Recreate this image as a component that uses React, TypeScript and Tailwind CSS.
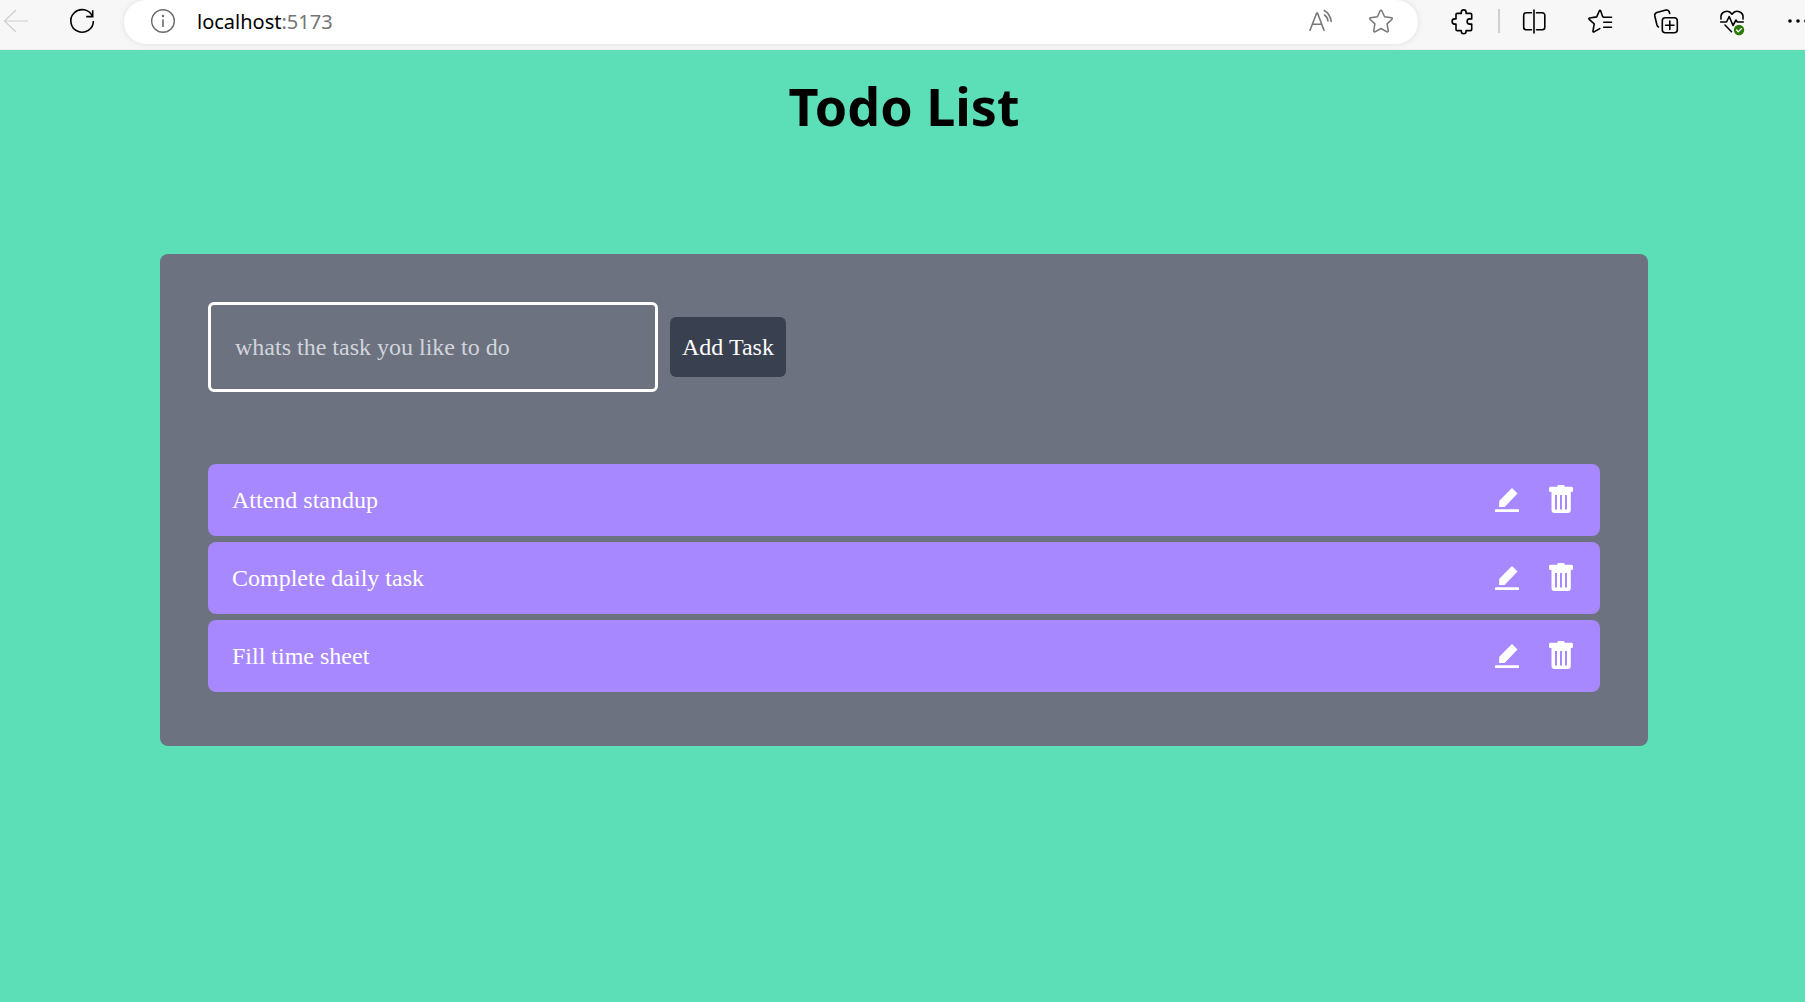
import React, { useState } from "react";

const TASKS = ["Attend standup", "Complete daily task", "Fill time sheet"];

type IconProps = { children: React.ReactNode; className?: string };

function Icon({ children, className = "text-black" }: IconProps) {
  return (
    <svg
      viewBox="0 0 24 24"
      className={`block size-6 overflow-visible ${className}`}
      fill="none"
      stroke="currentColor"
      strokeWidth="1.6"
      strokeLinecap="round"
      strokeLinejoin="round"
      aria-hidden="true"
    >
      {children}
    </svg>
  );
}

function ToolButton({ label, children, className }: IconProps & { label: string }) {
  return (
    <button type="button" aria-label={label} className="shrink-0">
      <Icon className={className}>{children}</Icon>
    </button>
  );
}

function BrowserBar() {
  const [url, setUrl] = useState("localhost:5173");
  const colon = url.indexOf(":");
  const host = colon < 0 ? url : url.slice(0, colon);
  const port = colon < 0 ? "" : url.slice(colon);
  return (
    <header className="flex h-[50px] items-start overflow-hidden border-b border-[#ebebeb] bg-[#f7f7f7] pl-1">
      <div className="flex h-11 shrink-0 items-center gap-[42px] pr-[30px] pb-0.5">
        <ToolButton label="Back" className="text-[#cfcfcf]">
          <path d="M0.5 12H23.5M11.5 1.5L0.5 12l11 10.5" strokeWidth="1.2" />
        </ToolButton>
        <ToolButton label="Refresh">
          <path d="M22.5 7.5A11.3 11.3 0 1 0 23.4 12M22.7 1.2v6.4h-6.5" strokeLinecap="butt" strokeLinejoin="miter" />
        </ToolButton>
      </div>
      <div className="flex h-11 min-w-0 flex-1 items-center rounded-full bg-white pr-[25px] pb-0.5 pl-[27px] shadow-[0_0_6px_rgba(0,0,0,0.1)]">
        <ToolButton label="Site information" className="text-[#6b6b6b]">
          <circle cx="12" cy="12" r="11.3" strokeWidth="1.4" />
          <path d="M12 10.5V18" strokeLinecap="butt" />
          <circle cx="12" cy="7" r="1.2" fill="currentColor" stroke="none" />
        </ToolButton>
        <button
          type="button"
          aria-label="Address"
          onClick={() => setUrl(url)}
          className="ml-[22px] flex-1 pt-0.5 text-left font-['Noto_Sans',sans-serif] text-[20px] leading-6 text-black"
        >
          {host}
          <span className="text-[#757575]">{port}</span>
        </button>
        <div className="flex items-center gap-9">
          <ToolButton label="Read aloud" className="text-[#777777]">
            <path d="M1 21.3L7.7 4h.8L15 21.3M3.5 15.3h9.2M15.2 1.5C19 3.5 21.5 7.5 22.2 12.5M15.5 6c2 1.300 3.200 3.500 3.500 6" strokeWidth="1.6" />
          </ToolButton>
          <ToolButton label="Add to favorites" className="text-[#777777]">
            <path
              d="M11.200 1.700a.9.9 0 0 1 1.600 0l2.800 6.100 6.900.9a.9.9 0 0 1 .5 1.500l-4.900 4.700 1.200 7a.9.9 0 0 1-1.300.9L12 19.500l-6 3.300a.9.9 0 0 1-1.300-.9l1.200-7L1 10.200a.9.9 0 0 1 .5-1.500l6.900-.9z"
              strokeWidth="1.5"
            />
          </ToolButton>
        </div>
      </div>
      <div className="flex h-11 shrink-0 items-center pb-0.5 pl-8">
        <ToolButton label="Extensions">
          <path d="M7.200 4.400H11.300V3.300a2.400 2.400 0 0 1 4.800 0V4.400h4.400a1.200 1.200 0 0 1 1.200 1.200V9.900H19.700a2.500 2.500 0 0 0 0 5.200h2v5.300a1.200 1.200 0 0 1-1.200 1.200H16.100v.7a2.400 2.400 0 0 1-4.800 0v-.7H7.200a1.200 1.200 0 0 1-1.200-1.200V15.100H4.700a2.500 2.500 0 0 1 0-5.200H6V5.600a1.200 1.200 0 0 1 1.200-1.200z" />
        </ToolButton>
        <span className="mr-[22px] ml-6 h-6 w-0.5 bg-[#cfcfcf]" />
        <div className="-mr-[5px] flex items-center gap-[42px]">
          <ToolButton label="Split screen">
            <path d="M12 1v23" />
            <path d="M9.500 3.800H4.200a2.500 2.500 0 0 0-2.500 2.500v12a2.500 2.500 0 0 0 2.500 2.500h5.300M14.500 3.800h5.800a2.500 2.500 0 0 1 2.500 2.500v12a2.500 2.500 0 0 1-2.500 2.500h-5.800" />
          </ToolButton>
          <ToolButton label="Favorites">
            <path d="M23.500 8.200H16l-1.300-.5L12.700 2q-.7-1.300-1.400 0L8.700 7.900 1.600 9q-1.300.400-.4 1.400l5 4.500L5 22q-.1 1.400 1 .9l5.800-3.300M15.700 13.300h7.800M15.700 18.200h7.800" />
          </ToolButton>
          <ToolButton label="Collections">
            <rect x="8.300" y="8.700" width="15" height="15" rx="3" />
            <path d="M15.800 12v8.400M11.600 16.200h8.400M4.500 18C3.500 17.500 3.100 16.500 2.800 15.500L.8 7C.4 5 1.300 4 2.800 3.500L12 1.100c2-.4 3.200.5 3.700 3.400" />
          </ToolButton>
          <ToolButton label="Browser essentials">
            <path d="M1 10C-.200 3 8-.500 12 5.200 16-.500 24.200 3 23 10M.7 13H6.500l2.700-5.500 3.800 9 3-5.500 1.300 2h6M5 16l6.500 6.700" />
            <circle cx="19" cy="21" r="5.200" fill="#2b7a0b" stroke="none" />
            <path d="M16.600 21l1.700 1.700 3-3" stroke="white" strokeWidth="1.3" />
          </ToolButton>
          <ToolButton label="More">
            <g fill="currentColor" stroke="none">
              <circle cx="4" cy="12" r="1.800" />
              <circle cx="12" cy="12" r="1.800" />
              <circle cx="20" cy="12" r="1.800" />
            </g>
          </ToolButton>
        </div>
      </div>
    </header>
  );
}

function EditIcon() {
  return (
    <svg viewBox="0 0 24 24" className="block size-6" fill="white" aria-hidden="true">
      <path d="M17 0l5.500 5.500-11.500 12L9.500 19H4l.3-6.300z" />
      <rect y="21.300" width="24" height="2.700" rx=".5" />
    </svg>
  );
}

function TrashIcon() {
  return (
    <svg viewBox="0 0 24 30" className="block h-[30px] w-6" fill="white" aria-hidden="true">
      <path
        fillRule="evenodd"
        d="M10 0h4a1.500 1.500 0 0 1 1.500 1.800h7A1.500 1.500 0 0 1 24 3.300V5.500A1.500 1.500 0 0 1 22.500 7h-.7v18a3 3 0 0 1-3 3H5.500a3 3 0 0 1-3-3V7h-1A1.500 1.500 0 0 1 0 5.500V3.300A1.500 1.500 0 0 1 1.500 1.800h7A1.500 1.500 0 0 1 10 0zM6 10v14.500h2V10zM11 10v14.500h2V10zM16 10v14.500h2V10z"
      />
    </svg>
  );
}

export default function App() {
  const [tasks, setTasks] = useState(TASKS);
  const [draft, setDraft] = useState("");

  const addTask = (event: React.FormEvent) => {
    event.preventDefault();
    if (draft.trim()) {
      setTasks([...tasks, draft.trim()]);
      setDraft("");
    }
  };

  return (
    <div className="min-h-screen bg-[#5cdeb7] font-['Liberation_Serif',serif] text-2xl text-white">
      <BrowserBar />
      <main className="pr-[157px] pl-40">
        <h1 className="pt-[18px] text-center font-['Noto_Sans',sans-serif] text-[52px] leading-[76px] font-bold text-black">
          Todo List
        </h1>
        <section className="mt-[110px] rounded-lg bg-[#6c7280] px-12 pt-12 pb-[54px]">
          <form onSubmit={addTask} className="flex items-center gap-3">
            <input
              type="text"
              aria-label="New task"
              value={draft}
              onChange={(event) => setDraft(event.target.value)}
              placeholder="whats the task you like to do"
              className="h-[90px] w-[450px] rounded-md border-3 border-white bg-transparent px-6 outline-none placeholder:text-[#d1d5db]"
            />
            <button type="submit" className="h-[60px] rounded-md bg-[#394150] px-3">
              Add Task
            </button>
          </form>
          <ul className="mt-[72px] flex flex-col gap-1.5">
            {tasks.map((task) => (
              <li key={task} className="flex h-[72px] items-center rounded-lg bg-[#a888fe] pr-[27px] pl-6">
                <span className="flex-1">{task}</span>
                <div className="flex items-center gap-[30px]">
                  <button type="button" aria-label={`Edit ${task}`}>
                    <EditIcon />
                  </button>
                  <button
                    type="button"
                    aria-label={`Delete ${task}`}
                    onClick={() => setTasks(tasks.filter((other) => other !== task))}
                  >
                    <TrashIcon />
                  </button>
                </div>
              </li>
            ))}
          </ul>
        </section>
      </main>
    </div>
  );
}
